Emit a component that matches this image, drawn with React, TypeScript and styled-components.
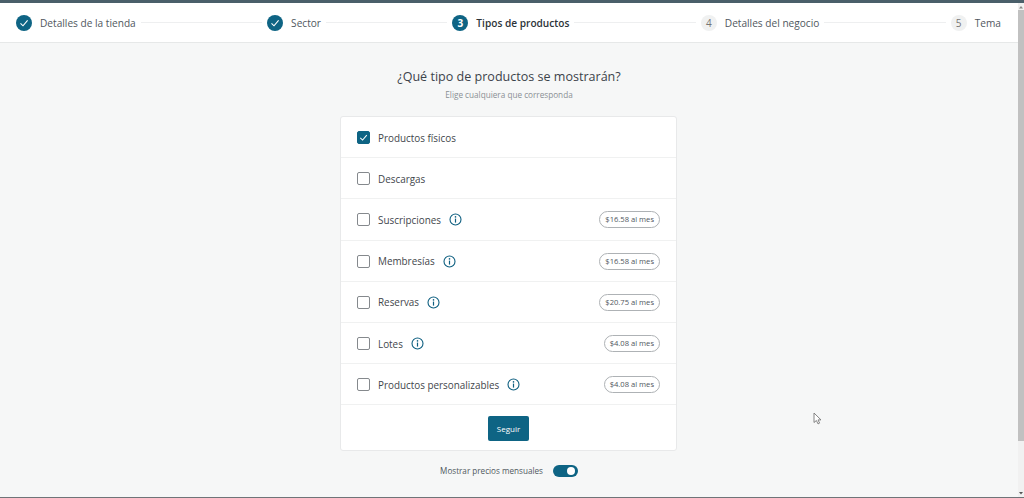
import React from "react";
import styled, { createGlobalStyle } from "styled-components";

const Global = createGlobalStyle`
  html, body { margin: 0; padding: 0; height: 100%; overflow: hidden; }
  body { font-family: "Open Sans", "Liberation Sans", sans-serif; background: #f6f7f7; color: #3c434a; }
  #root { height: 100%; }
`;

const Page = styled.div`
  position: relative;
  width: 1024px;
  height: 498px;
  display: flex;
  flex-direction: column;
  overflow: hidden;
  background-color: #f6f7f7;
  border-top: 3px solid #4a5f6a;
  border-bottom: 1px solid #6f7478;
  box-sizing: border-box;
`;

const Body = styled.div`
  flex: 1;
  display: flex;
  min-height: 0;
`;

const Main = styled.div`
  flex: 1;
  display: flex;
  flex-direction: column;
  min-width: 0;
`;

const Stepper = styled.div`
  height: 40px;
  flex: none;
  box-sizing: border-box;
  background: #fff;
  border-bottom: 1px solid #e6e8e8;
  display: flex;
  align-items: center;
  padding: 0 17px 0 16px;
`;

const Step = styled.div<{ $last?: boolean }>`
  display: flex;
  align-items: center;
  flex: ${(p) => (p.$last ? "none" : "1 1 auto")};
`;

const Dot = styled.span<{ $state: "done" | "active" | "todo" }>`
  width: 16px;
  height: 16px;
  border-radius: 50%;
  flex: none;
  display: flex;
  align-items: center;
  justify-content: center;
  font-size: 10px;
  font-weight: ${(p) => (p.$state === "active" ? 700 : 400)};
  background: ${(p) => (p.$state === "todo" ? "#f0f1f1" : "#0e6484")};
  color: ${(p) => (p.$state === "todo" ? "#757575" : "#fff")};
`;

const StepLabel = styled.span<{ $active?: boolean }>`
  margin-left: 8px;
  font-size: 10.15px;
  line-height: 16px;
  white-space: nowrap;
  color: ${(p) => (p.$active ? "#2c3338" : "#50575e")};
  font-weight: ${(p) => (p.$active ? 600 : 400)};
`;

const StepLine = styled.span`
  flex: 1;
  height: 1px;
  background: #eeeff0;
  margin: 0 5px;
`;

const Content = styled.div`
  flex: 1;
  display: flex;
  flex-direction: column;
  align-items: center;
`;

const Title = styled.h1`
  margin: 24px 0 0;
  font-size: 12.55px;
  line-height: 20px;
  font-weight: 400;
  color: #3c434a;
`;

const Subtitle = styled.p`
  margin: 2px 0 0;
  font-size: 8.2px;
  line-height: 12px;
  color: #8a8f94;
`;

const Card = styled.div`
  margin: 15px 1px 0 0;
  width: 337px;
  height: 335px;
  box-sizing: border-box;
  background: #fff;
  border: 1px solid #e8e9ea;
  border-radius: 3px;
  display: flex;
  flex-direction: column;
`;

const Row = styled.div`
  height: 41.2px;
  flex: none;
  box-sizing: border-box;
  border-bottom: 1px solid #f0f1f1;
  display: flex;
  align-items: center;
  padding: 1px 16px 0;
`;

const Box = styled.span<{ $checked?: boolean }>`
  width: 13px;
  height: 13px;
  box-sizing: border-box;
  flex: none;
  border-radius: 2px;
  border: 1px solid ${(p) => (p.$checked ? "#0e6484" : "#85898d")};
  background: ${(p) => (p.$checked ? "#0e6484" : "#fff")};
  display: flex;
  align-items: center;
  justify-content: center;
`;

const RowLabel = styled.span`
  margin-left: 8px;
  font-size: 9.9px;
  line-height: 16px;
  color: #3f464c;
`;

const Info = styled.svg`
  margin-left: 8px;
  flex: none;
`;

const Price = styled.span`
  margin-left: auto;
  height: 17px;
  box-sizing: border-box;
  padding: 0 5px;
  border: 1px solid #aeb2b5;
  border-radius: 9px;
  font-size: 7.6px;
  line-height: 15px;
  color: #50575e;
  white-space: nowrap;
`;

const Footer = styled.div`
  flex: 1;
  display: flex;
  justify-content: center;
  padding-top: 11px;
`;

const Continue = styled.button`
  width: 41px;
  height: 25px;
  padding: 0;
  border: 0;
  border-radius: 2px;
  background: #0e6484;
  color: #fff;
  font-family: inherit;
  font-size: 8px;
`;

const ToggleRow = styled.div`
  margin-top: 14px;
  display: flex;
  align-items: center;
  gap: 10px;
  font-size: 8.15px;
  line-height: 12px;
  color: #50575e;
`;

const Toggle = styled.span`
  width: 25px;
  height: 12px;
  border-radius: 6px;
  background: #0e6484;
  display: flex;
  align-items: center;
  justify-content: flex-end;
  padding-right: 3px;
  box-sizing: border-box;
`;

const Knob = styled.span`
  width: 8px;
  height: 8px;
  border-radius: 50%;
  background: #fff;
`;

const Scrollbar = styled.div`
  width: 6px;
  flex: none;
  background: #f1f1f1;
  display: flex;
  flex-direction: column;
  align-items: center;
`;

const ScrollArrow = styled.svg`
  flex: none;
  height: 7px;
  width: 6px;
`;

const Thumb = styled.div`
  width: 6px;
  height: 431px;
  background: #c1c1c1;
`;

const ScrollGap = styled.div`
  flex: 1;
`;

const Cursor = styled.svg`
  position: absolute;
  left: 813px;
  top: 409px;
`;

const Check = ({ size }: { size: number }) => (
  <svg width={size} height={size} viewBox="0 0 12 12" fill="none">
    <path d="M2.5 6.4 5 8.8 9.6 3.4" stroke="#fff" strokeWidth="1.1" />
  </svg>
);

const InfoIcon = () => (
  <Info width="13" height="13" viewBox="0 0 13 13" fill="none">
    <circle cx="6.5" cy="6.5" r="5.5" stroke="#0e5f80" strokeWidth="1.1" />
    <circle cx="6.5" cy="3.9" r="0.8" fill="#0e5f80" />
    <path d="M6.5 5.6v4" stroke="#0e5f80" strokeWidth="1.2" />
  </Info>
);

const steps: { label: string; state: "done" | "active" | "todo"; n: number }[] = [
  { label: "Detalles de la tienda", state: "done", n: 1 },
  { label: "Sector", state: "done", n: 2 },
  { label: "Tipos de productos", state: "active", n: 3 },
  { label: "Detalles del negocio", state: "todo", n: 4 },
  { label: "Tema", state: "todo", n: 5 },
];

const rows: { label: string; checked?: boolean; info?: boolean; price?: string }[] = [
  { label: "Productos físicos", checked: true },
  { label: "Descargas" },
  { label: "Suscripciones", info: true, price: "$16.58 al mes" },
  { label: "Membresías", info: true, price: "$16.58 al mes" },
  { label: "Reservas", info: true, price: "$20.75 al mes" },
  { label: "Lotes", info: true, price: "$4.08 al mes" },
  { label: "Productos personalizables", info: true, price: "$4.08 al mes" },
];

export default function App() {
  return (
    <Page>
      <Global />
      <Body>
        <Main>
          <Stepper>
            {steps.map((s, i) => (
              <Step key={s.label} $last={i === steps.length - 1}>
                <Dot $state={s.state}>{s.state === "done" ? <Check size={12} /> : s.n}</Dot>
                <StepLabel $active={s.state === "active"}>{s.label}</StepLabel>
                {i < steps.length - 1 && <StepLine />}
              </Step>
            ))}
          </Stepper>
          <Content>
            <Title>¿Qué tipo de productos se mostrarán?</Title>
            <Subtitle>Elige cualquiera que corresponda</Subtitle>
            <Card>
              {rows.map((r) => (
                <Row key={r.label}>
                  <Box $checked={r.checked}>{r.checked && <Check size={11} />}</Box>
                  <RowLabel>{r.label}</RowLabel>
                  {r.info && <InfoIcon />}
                  {r.price && <Price>{r.price}</Price>}
                </Row>
              ))}
              <Footer>
                <Continue>Seguir</Continue>
              </Footer>
            </Card>
            <ToggleRow>
              Mostrar precios mensuales
              <Toggle>
                <Knob />
              </Toggle>
            </ToggleRow>
          </Content>
        </Main>
        <Scrollbar>
          <ScrollArrow viewBox="0 0 6 7">
            <path d="M3 3 5 5.5H1z" fill="#8a8a8a" />
          </ScrollArrow>
          <Thumb />
          <ScrollGap />
          <ScrollArrow viewBox="0 0 6 7">
            <path d="M3 4.5 1 2h4z" fill="#555" />
          </ScrollArrow>
        </Scrollbar>
      </Body>
      <Cursor width="9" height="13" viewBox="0 0 9 13">
        <path d="M1 1v9.5l2.4-2 1.6 3.4 1.6-.8-1.6-3.2H8z" fill="#fff" stroke="#777" strokeWidth="0.9" />
      </Cursor>
    </Page>
  );
}
